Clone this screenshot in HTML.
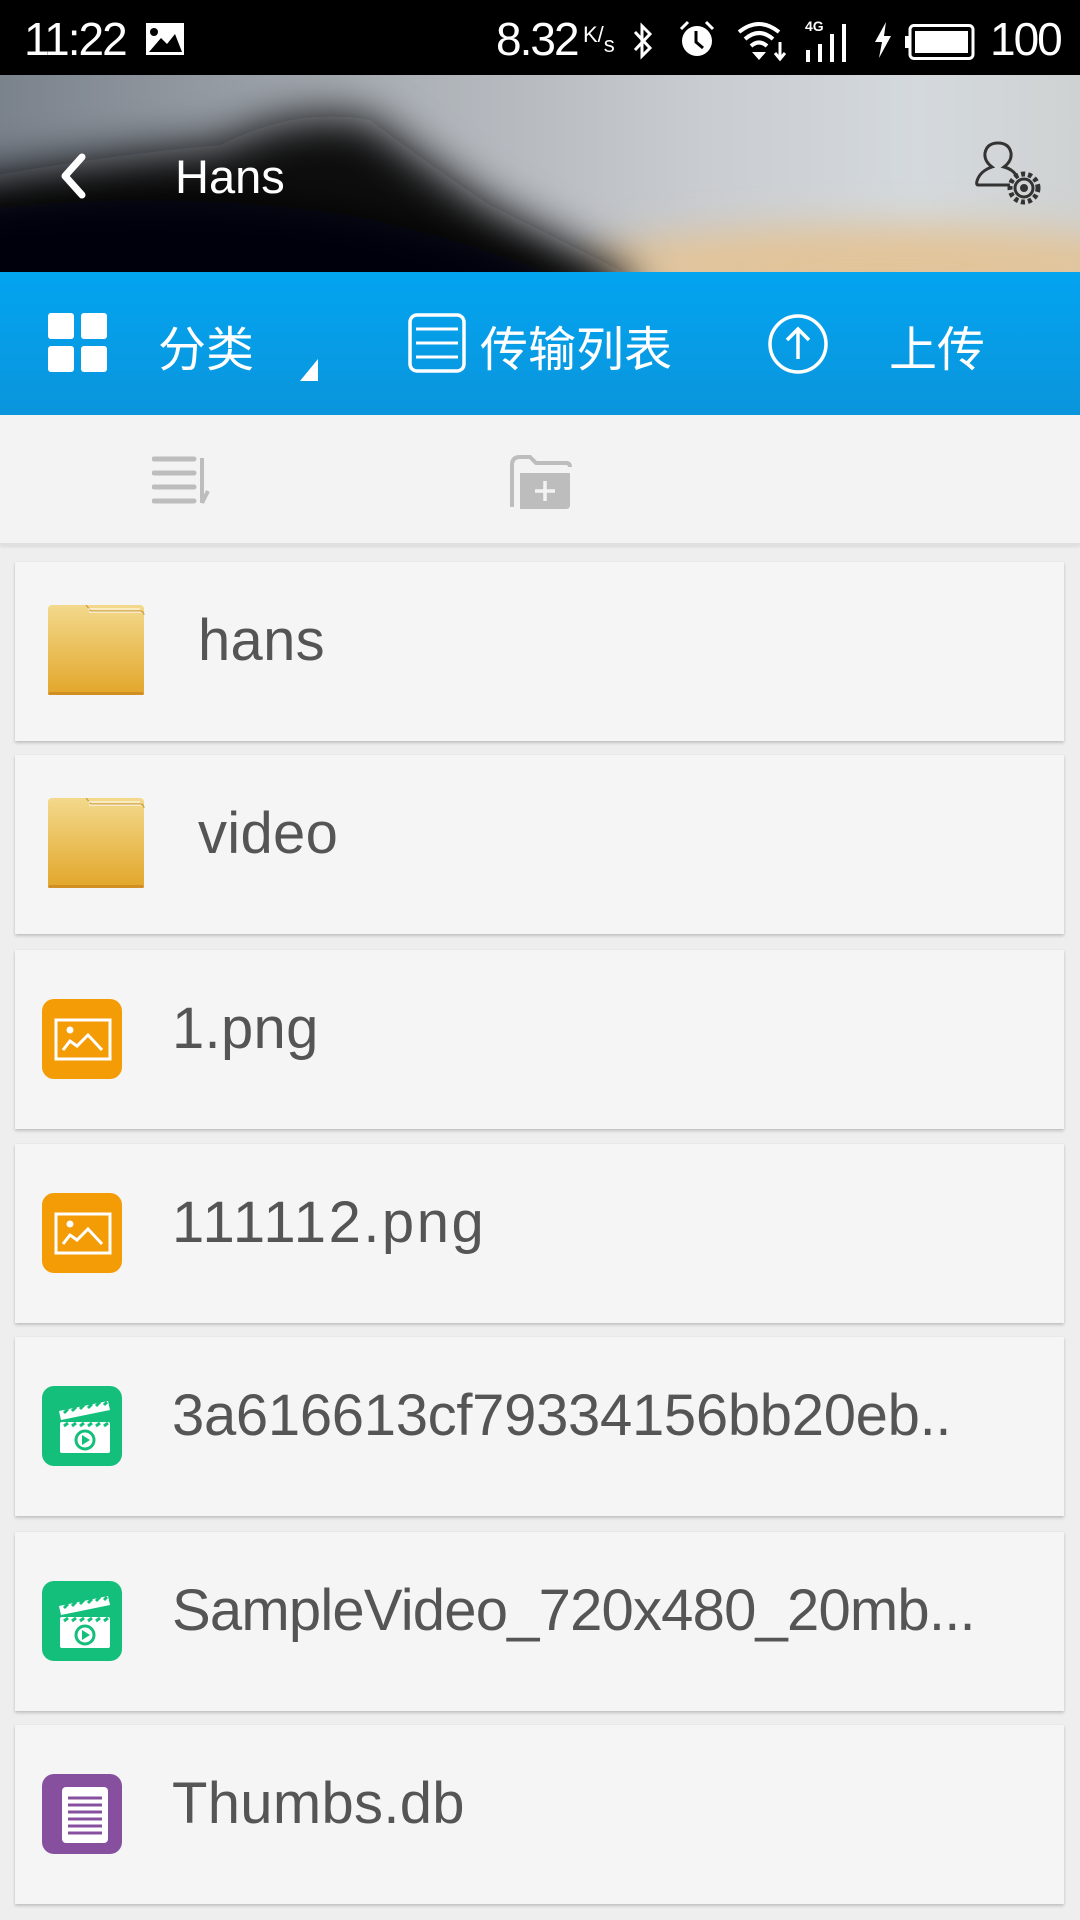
<!DOCTYPE html>
<html><head><meta charset="utf-8">
<style>
*{margin:0;padding:0;box-sizing:border-box}
body{width:1080px;height:1920px;overflow:hidden;background:#eeeeee;font-family:"Liberation Sans","Noto Sans CJK SC",sans-serif;position:relative}
.abs{position:absolute}
#status{left:0;top:0;width:1080px;height:75px;background:#000;color:#fff}
#hdr{left:0;top:75px;width:1080px;height:197px;overflow:hidden}
#blue{left:0;top:272px;width:1080px;height:143px;background:linear-gradient(#03a4f0,#0a95dc);color:#fff}
#tool{left:0;top:415px;width:1080px;height:130px;background:#f3f3f3;border-bottom:2px solid #e0e0e0;box-shadow:0 2px 3px rgba(0,0,0,.08)}
.card{position:absolute;left:15px;width:1049px;height:179px;background:#f5f5f5;box-shadow:0 2px 3px rgba(0,0,0,.18),0 0 2px rgba(0,0,0,.06)}
.card .t{position:absolute;top:45px;font-size:58px;color:#555;font-family:"Liberation Sans",sans-serif;letter-spacing:0.3px}
.card svg{position:absolute}
</style></head><body>
<div id="status" class="abs">
 <div class="abs" style="left:24px;top:12px;font-size:46px;letter-spacing:-2px">11:22</div>
 <svg class="abs" style="left:145px;top:22px" width="40" height="34" viewBox="0 0 40 34"><rect x="1" y="1" width="38" height="32" fill="#fff"/><circle cx="9" cy="10" r="4" fill="#000"/><path d="M4 30 L16 16 L22 22 L30 12 L37 30Z" fill="#000"/></svg>
 <div class="abs" style="left:496px;top:12px;font-size:46px;letter-spacing:-2px">8.32</div>
 <div class="abs" style="left:583px;top:22px;font-size:22px">K/<span style="font-size:22px;position:relative;top:10px">s</span></div>
 <svg class="abs" style="left:632px;top:22px" width="22" height="38" viewBox="0 0 22 38"><path d="M3 10 L18 26 L10 34 L10 4 L18 12 L3 28" fill="none" stroke="#fff" stroke-width="3"/></svg>
 <svg class="abs" style="left:679px;top:20px" width="36" height="38" viewBox="0 0 36 38"><circle cx="18" cy="21" r="15" fill="#fff"/><path d="M17 11 V22 L24 28" stroke="#000" stroke-width="3" fill="none"/><path d="M2 9 L9 2 M34 9 L27 2" stroke="#fff" stroke-width="3"/></svg>
 <svg class="abs" style="left:736px;top:20px" width="50" height="42" viewBox="0 0 50 42"><path d="M3 12 Q23 -4 43 12 M9 19 Q23 7 37 19 M15 26 Q23 19 31 26" stroke="#fff" stroke-width="4" fill="none"/><path d="M16 32 L23 40 L30 32Z" fill="#fff"/><path d="M44 22 V38 M39 33 L44 39 L49 33" stroke="#fff" stroke-width="3" fill="none"/></svg>
 <div class="abs" style="left:805px;top:18px;font-size:14px;font-weight:bold">4G</div>
 <svg class="abs" style="left:806px;top:22px" width="48" height="40" viewBox="0 0 48 40"><rect x="0" y="28" width="4" height="12" fill="#fff"/><rect x="12" y="22" width="4" height="18" fill="#fff"/><rect x="24" y="12" width="4" height="28" fill="#fff"/><rect x="36" y="2" width="4" height="38" fill="#fff"/></svg>
 <svg class="abs" style="left:873px;top:22px" width="20" height="36" viewBox="0 0 20 36"><path d="M13 0 L2 20 H9 L6 36 L18 14 H11Z" fill="#fff"/></svg>
 <svg class="abs" style="left:905px;top:24px" width="70" height="36" viewBox="0 0 70 36"><rect x="5" y="1.5" width="63" height="33" rx="4" fill="none" stroke="#fff" stroke-width="3"/><rect x="10" y="7" width="53" height="22" fill="#fff"/><rect x="0" y="12" width="4" height="12" fill="#fff"/></svg>
 <div class="abs" style="left:990px;top:12px;font-size:46px;letter-spacing:-2px">100</div>
</div>
<div id="hdr" class="abs">
 <svg class="abs" style="left:0;top:0" width="1080" height="197" viewBox="0 0 1080 197">
  <defs>
   <linearGradient id="sky" x1="0" y1="0" x2="1" y2="0"><stop offset="0" stop-color="#7a828c"/><stop offset=".35" stop-color="#a9aeb4"/><stop offset=".65" stop-color="#c9ccd0"/><stop offset=".85" stop-color="#d4d9dd"/><stop offset="1" stop-color="#cfd2d2"/></linearGradient>
   <filter id="b1" x="-30%" y="-60%" width="160%" height="220%"><feGaussianBlur stdDeviation="22"/></filter>
   <filter id="b2" x="-30%" y="-100%" width="160%" height="300%"><feGaussianBlur stdDeviation="18"/></filter>
  </defs>
  <rect width="1080" height="197" fill="url(#sky)"/>
  <ellipse cx="880" cy="190" rx="300" ry="40" fill="#e2c49a" filter="url(#b2)"/>
  <path d="M-60 230 L-60 110 Q100 80 220 70 Q300 30 370 45 Q430 90 490 130 Q570 170 630 200 L630 240Z" fill="#07080c" filter="url(#b1)"/>
  <path d="M-60 240 L-60 140 Q150 110 350 140 Q500 170 620 230Z" fill="#050507" filter="url(#b2)"/>
 </svg>
 <svg class="abs" style="left:58px;top:78px" width="30" height="46" viewBox="0 0 30 46"><path d="M24 4 L7 23 L24 42" stroke="#fff" stroke-width="7" fill="none" stroke-linecap="round" stroke-linejoin="round"/></svg>
 <div class="abs" style="left:175px;top:74px;font-size:47px;color:#fff">Hans</div>
 <svg class="abs" style="left:974px;top:66px" width="70" height="66" viewBox="0 0 70 66"><path d="M36 44 H4 Q2 44 3 40 Q6 30 18 26 Q10 20 11 12 Q13 2 24 2 Q35 2 37 12 Q38 20 30 26 Q38 28 42 34" fill="none" stroke="#333" stroke-width="3"/><circle cx="50" cy="47" r="14" fill="none" stroke="#333" stroke-width="5" stroke-dasharray="4 3"/><circle cx="50" cy="47" r="9" fill="none" stroke="#333" stroke-width="3"/><circle cx="50" cy="47" r="4" fill="#333"/></svg>
</div>
<div id="blue" class="abs">
 <svg class="abs" style="left:48px;top:41px" width="60" height="60" viewBox="0 0 60 60"><rect x="0" y="0" width="26" height="26" rx="3" fill="#fff"/><rect x="33" y="0" width="26" height="26" rx="3" fill="#fff"/><rect x="0" y="33" width="26" height="26" rx="3" fill="#fff"/><rect x="33" y="33" width="26" height="26" rx="3" fill="#fff"/></svg>
 <div class="abs" style="left:158px;top:38px;font-size:48px">分类</div>
 <svg class="abs" style="left:300px;top:87px" width="20" height="22" viewBox="0 0 20 22"><path d="M18 0 V22 H0Z" fill="#fff"/></svg>
 <svg class="abs" style="left:408px;top:41px" width="58" height="60" viewBox="0 0 58 60"><rect x="2" y="2" width="54" height="56" rx="7" fill="none" stroke="#fff" stroke-width="3.5"/><path d="M8 16 H50 M8 30 H50 M8 44 H50" stroke="#fff" stroke-width="3"/></svg>
 <div class="abs" style="left:480px;top:38px;font-size:48px">传输列表</div>
 <svg class="abs" style="left:767px;top:41px" width="62" height="62" viewBox="0 0 62 62"><circle cx="31" cy="31" r="28" fill="none" stroke="#fff" stroke-width="3.5"/><path d="M31 46 V16 M20 27 L31 16 L42 27" stroke="#fff" stroke-width="3.5" fill="none"/></svg>
 <div class="abs" style="left:889px;top:38px;font-size:48px">上传</div>
</div>
<div id="tool" class="abs">
 <svg class="abs" style="left:152px;top:40px" width="60" height="52" viewBox="0 0 60 52"><path d="M2 4 H42 M2 18 H42 M2 32 H42 M2 46 H42" stroke="#bdbdbd" stroke-width="5" stroke-linecap="round"/><path d="M50 3 V48 M50 48 L56 36" stroke="#bdbdbd" stroke-width="4" fill="none"/></svg>
 <svg class="abs" style="left:508px;top:40px" width="64" height="54" viewBox="0 0 64 54"><path d="M4 52 V10 Q4 2 12 2 H22 L28 8 H58 Q62 8 62 12" fill="none" stroke="#bdbdbd" stroke-width="4"/><path d="M12 18 H62 V50 Q62 54 58 54 H12Z" fill="#bdbdbd"/><path d="M37 26 V46 M27 36 H47" stroke="#f3f3f3" stroke-width="3.5"/></svg>
</div>

<div class="card" style="top:562px">
 <svg style="left:33px;top:43px" width="98" height="91" viewBox="0 0 98 91"><defs><linearGradient id="fg" x1="0" y1="0" x2="0" y2="1"><stop offset="0" stop-color="#f3d98c"/><stop offset="1" stop-color="#e2a62a"/></linearGradient></defs><rect x="0" y="0" width="96" height="90" rx="4" fill="url(#fg)"/><path d="M38 0 L43 6 H92 Q96 6 96 10" fill="none" stroke="#c89532" stroke-width="1"/><path d="M40 4 H92 M41 7 H93" stroke="#fff" stroke-width="1"/><rect x="0" y="87" width="96" height="3" rx="1.5" fill="#d08f20"/></svg>
 <div class="t" style="left:183px">hans</div>
</div>
<div class="card" style="top:755px">
 <svg style="left:33px;top:43px" width="98" height="91" viewBox="0 0 98 91"><rect x="0" y="0" width="96" height="90" rx="4" fill="url(#fg)"/><path d="M38 0 L43 6 H92 Q96 6 96 10" fill="none" stroke="#c89532" stroke-width="1"/><path d="M40 4 H92 M41 7 H93" stroke="#fff" stroke-width="1"/><rect x="0" y="87" width="96" height="3" rx="1.5" fill="#d08f20"/></svg>
 <div class="t" style="left:183px">video</div>
</div>
<div class="card" style="top:950px">
 <svg style="left:27px;top:49px" width="80" height="80" viewBox="0 0 80 80"><rect width="80" height="80" rx="12" fill="#f39c06"/><rect x="14" y="21" width="54" height="39" fill="none" stroke="#fff" stroke-width="3"/><circle cx="28" cy="31" r="3.5" fill="#fff"/><path d="M21 51 L28 42 L35 47 L46 36 L60 51" fill="none" stroke="#fff" stroke-width="3"/></svg>
 <div class="t" style="left:157px">1.png</div>
</div>
<div class="card" style="top:1144px">
 <svg style="left:27px;top:49px" width="80" height="80" viewBox="0 0 80 80"><rect width="80" height="80" rx="12" fill="#f39c06"/><rect x="14" y="21" width="54" height="39" fill="none" stroke="#fff" stroke-width="3"/><circle cx="28" cy="31" r="3.5" fill="#fff"/><path d="M21 51 L28 42 L35 47 L46 36 L60 51" fill="none" stroke="#fff" stroke-width="3"/></svg>
 <div class="t" style="left:157px;letter-spacing:2.5px">111112.png</div>
</div>
<div class="card" style="top:1337px">
 <svg style="left:27px;top:49px" width="80" height="80" viewBox="0 0 80 80"><rect width="80" height="80" rx="12" fill="#13bf7a"/><path d="M17 25 L66 15 L68 24 L19 34Z" fill="#fff"/><path d="M22 27 l4 -4 M30 25 l4 -4 M38 23 l4 -4 M46 22 l4 -4 M54 20 l4 -4 M62 19 l3 -3" stroke="#13bf7a" stroke-width="3"/><rect x="18" y="36" width="50" height="31" rx="2" fill="#fff"/><path d="M22 40 l4 -3 M30 40 l4 -3 M38 40 l4 -3 M46 40 l4 -3 M54 40 l4 -3 M62 40 l4 -3" stroke="#13bf7a" stroke-width="3"/><circle cx="43" cy="54" r="9" fill="none" stroke="#13bf7a" stroke-width="3"/><path d="M40 49 L48 54 L40 59Z" fill="#13bf7a"/></svg>
 <div class="t" style="left:157px;letter-spacing:-0.3px">3a616613cf79334156bb20eb..</div>
</div>
<div class="card" style="top:1532px">
 <svg style="left:27px;top:49px" width="80" height="80" viewBox="0 0 80 80"><rect width="80" height="80" rx="12" fill="#13bf7a"/><path d="M17 25 L66 15 L68 24 L19 34Z" fill="#fff"/><path d="M22 27 l4 -4 M30 25 l4 -4 M38 23 l4 -4 M46 22 l4 -4 M54 20 l4 -4 M62 19 l3 -3" stroke="#13bf7a" stroke-width="3"/><rect x="18" y="36" width="50" height="31" rx="2" fill="#fff"/><path d="M22 40 l4 -3 M30 40 l4 -3 M38 40 l4 -3 M46 40 l4 -3 M54 40 l4 -3 M62 40 l4 -3" stroke="#13bf7a" stroke-width="3"/><circle cx="43" cy="54" r="9" fill="none" stroke="#13bf7a" stroke-width="3"/><path d="M40 49 L48 54 L40 59Z" fill="#13bf7a"/></svg>
 <div class="t" style="left:157px;letter-spacing:-0.8px">SampleVideo_720x480_20mb...</div>
</div>
<div class="card" style="top:1725px">
 <svg style="left:27px;top:49px" width="80" height="80" viewBox="0 0 80 80"><rect width="80" height="80" rx="12" fill="#87509f"/><rect x="20" y="13" width="46" height="56" rx="4" fill="#fff"/><path d="M26 24 H60 M26 31 H60 M26 38 H60 M26 45 H60 M26 52 H60 M26 59 H60" stroke="#87509f" stroke-width="3"/></svg>
 <div class="t" style="left:157px">Thumbs.db</div>
</div>
</body></html>
